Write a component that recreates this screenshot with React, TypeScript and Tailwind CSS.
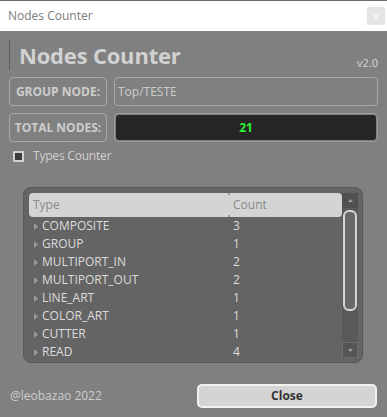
import React from "react";

const rows: [string, string][] = [
  ["COMPOSITE", "3"],
  ["GROUP", "1"],
  ["MULTIPORT_IN", "2"],
  ["MULTIPORT_OUT", "2"],
  ["LINE_ART", "1"],
  ["COLOR_ART", "1"],
  ["CUTTER", "1"],
  ["READ", "4"],
];

export default function App() {
  return (
    <div
      className="w-[387px] h-[417px] bg-[#808080] flex flex-col overflow-hidden"
      style={{ fontFamily: '"Open Sans", "Noto Sans", sans-serif' }}
    >
      <div className="h-px bg-[#6a6a6a]" />
      <div className="h-[30px] bg-white flex items-center justify-between pl-[8px] pr-[2px]">
        <span className="text-[12px] text-[#7c7c7c]">Nodes Counter</span>
        <div className="w-[18px] h-[18px] bg-[#e5e5e5] flex items-center justify-center text-white text-[10px] leading-none">
          x
        </div>
      </div>

      <div className="flex items-stretch h-[30px] mt-[9px] pl-[9px] pr-[9px]">
        <div className="w-px bg-[#5c5c5c]" />
        <div className="ml-[9px] text-[22px] font-bold text-[#d2d2d2] leading-[30px] tracking-[-0.2px]">
          Nodes Counter
        </div>
        <div className="ml-auto self-end text-[11px] text-[#d8d8d8] leading-none mb-[2px]">v2.0</div>
      </div>

      <div className="flex flex-col gap-[7px] mt-[7px] pl-[9px] pr-[9px]">
        <div className="flex gap-[7px] h-[29px]">
          <div className="w-[98px] border border-[#a9a9a9] rounded-[4px] flex items-center justify-center text-[12px] font-bold text-[#cdcdcd]">
            GROUP NODE:
          </div>
          <div className="flex-1 border border-[#a9a9a9] rounded-[4px] flex items-center pl-[3px] text-[12px] text-[#cbcbcb]">
            Top/TESTE
          </div>
        </div>
        <div className="flex gap-[7px] h-[29px]">
          <div className="w-[98px] border border-[#a9a9a9] rounded-[4px] flex items-center justify-center text-[12px] font-bold text-[#cdcdcd]">
            TOTAL NODES:
          </div>
          <div className="flex-1 border border-[#9a9a9a] rounded-[4px] p-px">
            <div className="h-full bg-[#262626] rounded-[3px] flex items-center justify-center text-[12px] font-bold text-[#2ef02e]">
              21
            </div>
          </div>
        </div>
      </div>

      <div className="flex items-center mt-[8px] pl-[13px] h-[12px]">
        <div className="w-[11px] h-[11px] border-2 border-[#d2d2d2] bg-[#3a3a3a] rounded-[1px]" />
        <span className="ml-[9px] text-[12px] text-[#d0d0d0] tracking-[-0.2px]">Types Counter</span>
      </div>

      <div className="mt-[25px] ml-[23px] w-[340px] h-[176px] rounded-[8px] border border-[#575757] bg-[#646464] pt-[5px] pl-[5px] pr-[4px] pb-[4px] flex">
        <div className="flex-1 flex flex-col overflow-hidden">
          <div className="h-[24px] bg-[#d4d4d4] rounded-[4px] flex items-center text-[12px] text-[#8a8a8a] relative shrink-0">
            <span className="pl-[4px] w-[200px]">Type</span>
            <span className="pl-[4px]">Count</span>
            <div className="absolute left-[199px] top-0 w-[2px] h-[2px] bg-[#9a9a9a]" />
            <div className="absolute left-[199px] bottom-0 w-[2px] h-[2px] bg-[#9a9a9a]" />
          </div>
          {rows.map(([t, c]) => (
            <div key={t} className="h-[18px] flex items-center text-[12px] text-[#dcdcdc] shrink-0">
              <div className="w-[13px] flex justify-center">
                <svg width="4" height="7" viewBox="0 0 4 7">
                  <path d="M0 0 L4 3.5 L0 7 Z" fill="#9a9a9a" />
                </svg>
              </div>
              <span className="w-[191px]">{t}</span>
              <span>{c}</span>
            </div>
          ))}
        </div>
        <div className="w-[16px] bg-[#595959] flex flex-col">
          <div className="h-[15px] bg-[#505050] flex items-center justify-center">
            <svg width="5" height="3" viewBox="0 0 5 3">
              <path d="M0 3 L2.5 0 L5 3 Z" fill="#a0a0a0" />
            </svg>
          </div>
          <div className="mt-[2px] mx-[1px] h-[101px] border-2 border-[#d6d6d6] rounded-[6px] bg-[#686868]" />
          <div className="flex-1" />
          <div className="h-[16px] border border-[#6e6e6e] bg-[#555555] flex items-center justify-center">
            <svg width="5" height="3" viewBox="0 0 5 3">
              <path d="M0 0 L2.5 3 L5 0 Z" fill="#a0a0a0" />
            </svg>
          </div>
        </div>
      </div>

      <div className="flex items-center justify-between mt-[21px] pl-[10px] pr-[10px]">
        <span className="text-[12px] text-[#cccccc]">@leobazao 2022</span>
        <button className="w-[180px] h-[24px] bg-[#d4d4d4] border-2 border-[#f2f2f2] rounded-[5px] text-[12px] font-bold text-[#333333] flex items-center justify-center">
          Close
        </button>
      </div>
    </div>
  );
}
